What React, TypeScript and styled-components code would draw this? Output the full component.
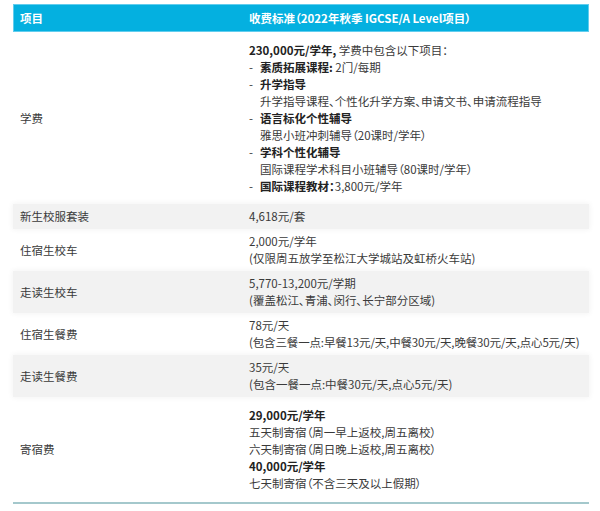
import styled, { createGlobalStyle } from 'styled-components';

const GlobalStyle = createGlobalStyle`
  html, body {
    margin: 0;
    padding: 0;
    background: #ffffff;
  }
  body {
    font-family: 'Noto Sans CJK SC', 'Noto Sans', sans-serif;
    font-feature-settings: 'palt';
    color: #3a3a3a;
  }
`;

const Page = styled.div`
  width: 576px;
  padding: 4px 11px 0 13px;
`;

const Header = styled.div`
  display: grid;
  grid-template-columns: 229px 1fr;
  align-items: center;
  height: 28px;
  box-sizing: border-box;
  background: #04b0e0;
  border: 1px solid #62cdee;
  color: #ffffff;
  font-size: 11.5px;
  font-weight: 700;
`;

const HeadCell = styled.div`
  padding: 0 6px;
`;

const Row = styled.div<{ $shaded?: boolean; $wide?: boolean }>`
  display: grid;
  grid-template-columns: 229px 1fr;
  padding: ${({ $wide }) => ($wide ? '10px 0 9px' : '4px 0')};
  background: ${({ $shaded }) => ($shaded ? '#f2f2f2' : 'transparent')};
  box-shadow: ${({ $shaded }) => ($shaded ? '0 0 5px 1px #f4f4f4' : 'none')};
  font-size: 11.5px;
  line-height: 17px;
`;

const Label = styled.div`
  display: flex;
  align-items: center;
  padding: 0 7px;
`;

const Detail = styled.div`
  padding: 0 7px;
`;

const Line = styled.div`
  white-space: nowrap;
`;

const Strong = styled.span`
  font-weight: 700;
  color: #222222;
`;

const Item = styled.div`
  display: flex;
  white-space: nowrap;
`;

const Dash = styled.span`
  width: 11px;
  flex: none;
`;

const Sub = styled.div`
  padding-left: 11px;
  white-space: nowrap;
`;

const Tight = styled.div`
  white-space: nowrap;
  letter-spacing: -0.15px;
`;

const BottomRule = styled.div`
  margin-top: 1px;
  height: 2px;
  background: #a4c8cc;
  box-shadow: 0 2px 0 #eaf7f9;
`;

export default function App() {
  return (
    <>
      <GlobalStyle />
      <Page>
        <Header>
          <HeadCell>项目</HeadCell>
          <HeadCell>收费标准（2022年秋季 IGCSE/A Level项目）</HeadCell>
        </Header>

        <Row $wide>
          <Label>学费</Label>
          <Detail>
            <Line>
              <Strong>230,000元/学年,</Strong> 学费中包含以下项目：
            </Line>
            <Item>
              <Dash>-</Dash>
              <span>
                <Strong>素质拓展课程:</Strong> 2门/每期
              </span>
            </Item>
            <Item>
              <Dash>-</Dash>
              <Strong>升学指导</Strong>
            </Item>
            <Sub>升学指导课程、个性化升学方案、申请文书、申请流程指导</Sub>
            <Item>
              <Dash>-</Dash>
              <Strong>语言标化个性辅导</Strong>
            </Item>
            <Sub>雅思小班冲刺辅导（20课时/学年）</Sub>
            <Item>
              <Dash>-</Dash>
              <Strong>学科个性化辅导</Strong>
            </Item>
            <Sub>国际课程学术科目小班辅导（80课时/学年）</Sub>
            <Item>
              <Dash>-</Dash>
              <span>
                <Strong>国际课程教材：</Strong>3,800元/学年
              </span>
            </Item>
          </Detail>
        </Row>

        <Row $shaded>
          <Label>新生校服套装</Label>
          <Detail>
            <Line>4,618元/套</Line>
          </Detail>
        </Row>

        <Row>
          <Label>住宿生校车</Label>
          <Detail>
            <Line>2,000元/学年</Line>
            <Line>(仅限周五放学至松江大学城站及虹桥火车站)</Line>
          </Detail>
        </Row>

        <Row $shaded>
          <Label>走读生校车</Label>
          <Detail>
            <Line>5,770-13,200元/学期</Line>
            <Line>(覆盖松江、青浦、闵行、长宁部分区域)</Line>
          </Detail>
        </Row>

        <Row>
          <Label>住宿生餐费</Label>
          <Detail>
            <Line>78元/天</Line>
            <Tight>(包含三餐一点:早餐13元/天,中餐30元/天,晚餐30元/天,点心5元/天)</Tight>
          </Detail>
        </Row>

        <Row $shaded>
          <Label>走读生餐费</Label>
          <Detail>
            <Line>35元/天</Line>
            <Line>(包含一餐一点:中餐30元/天,点心5元/天)</Line>
          </Detail>
        </Row>

        <Row $wide>
          <Label>寄宿费</Label>
          <Detail>
            <Line>
              <Strong>29,000元/学年</Strong>
            </Line>
            <Line>五天制寄宿（周一早上返校,周五离校）</Line>
            <Line>六天制寄宿（周日晚上返校,周五离校）</Line>
            <Line>
              <Strong>40,000元/学年</Strong>
            </Line>
            <Line>七天制寄宿（不含三天及以上假期）</Line>
          </Detail>
        </Row>

        <BottomRule />
      </Page>
    </>
  );
}
